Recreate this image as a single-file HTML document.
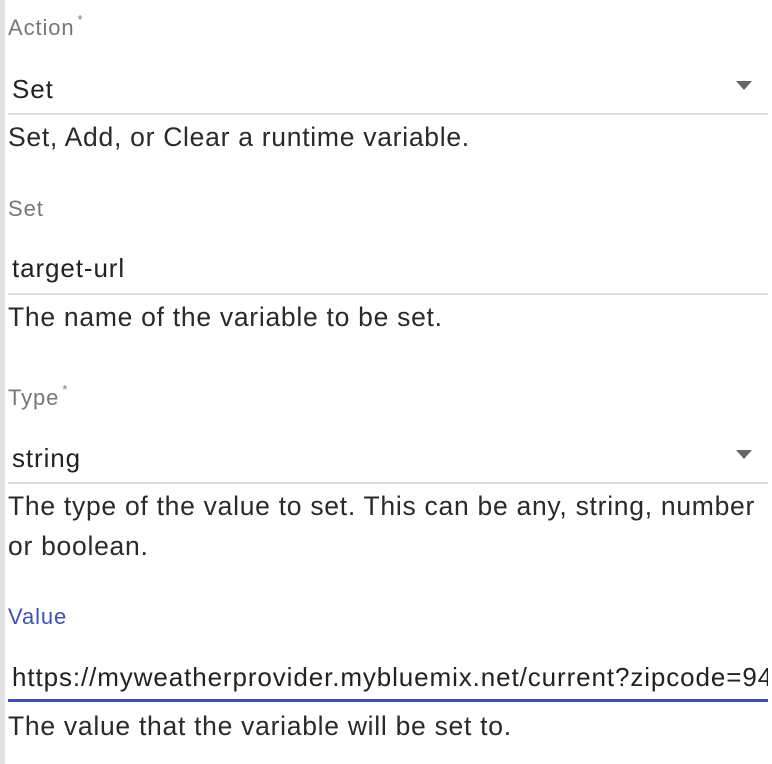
<!DOCTYPE html>
<html><head><meta charset="utf-8"><style>
html,body{margin:0;padding:0;width:772px;height:764px;overflow:hidden;background:#fff;font-family:"Liberation Sans",Arial,sans-serif;}
.bar{position:absolute;left:0;top:0;width:5px;height:764px;background:#e2e2e2;}
.t{position:absolute;white-space:nowrap;}
.lab{font-size:22px;color:#777;letter-spacing:0.9px;}
.lab sup{font-size:13px;position:relative;top:-3px;vertical-align:top;margin-left:3px;}
.val{font-size:26px;color:#222;left:12px;letter-spacing:0.9px;}
.help{font-size:26.5px;color:#2a2a2a;left:8px;line-height:40px;letter-spacing:0.72px;}
.ul{position:absolute;left:8px;width:760px;height:2px;background:#ddd;}
.arr{position:absolute;left:736px;width:0;height:0;border-left:8.5px solid transparent;border-right:8.5px solid transparent;border-top:9px solid #666;}
</style></head><body>
<div class="bar"></div>

<div class="t lab" style="left:8px;top:15px;">Action<sup>*</sup></div>
<div class="t val" style="top:74px;">Set</div>
<div class="arr" style="top:81px;"></div>
<div class="ul" style="top:113px;"></div>
<div class="t help" style="top:117px;">Set, Add, or Clear a runtime variable.</div>

<div class="t lab" style="left:8px;top:196px;">Set</div>
<div class="t val" style="top:253px;">target-url</div>
<div class="ul" style="top:293px;"></div>
<div class="t help" style="top:297px;">The name of the variable to be set.</div>

<div class="t lab" style="left:8px;top:385px;">Type<sup>*</sup></div>
<div class="t val" style="top:443px;">string</div>
<div class="arr" style="top:450px;"></div>
<div class="ul" style="top:482px;"></div>
<div class="t help" style="top:486px;">The type of the value to set. This can be any, string, number<br>or boolean.</div>

<div class="t lab" style="left:8px;top:604px;color:#3f51b5;">Value</div>
<div class="t val" style="top:662px;width:756px;overflow:hidden;">https://myweatherprovider.mybluemix.net/current?zipcode=94105</div>
<div class="ul" style="top:699px;height:3px;background:#3f51b5;"></div>
<div class="t help" style="top:706px;">The value that the variable will be set to.</div>
</body></html>
